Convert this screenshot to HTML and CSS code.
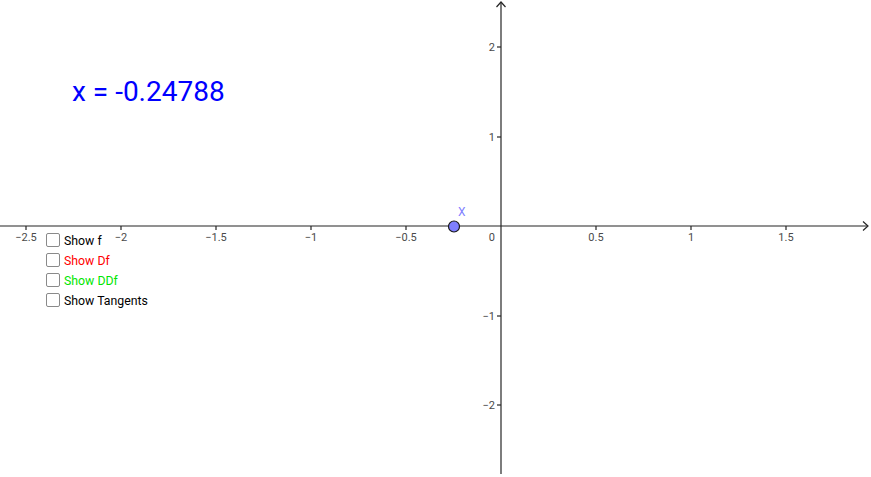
FILE: index.html
```html
<!DOCTYPE html>
<html>
<head>
<meta charset="utf-8">
<link rel="stylesheet" href="styles.css">
</head>
<body>
<div class="canvas">
  <svg class="graph" width="871" height="477" viewBox="0 0 871 477" xmlns="http://www.w3.org/2000/svg">
    <g class="axis">
      <line x1="0" y1="226" x2="868" y2="226"/>
      <polyline points="863,221.5 868,226 863,230.5" fill="none"/>
      <line x1="501" y1="2" x2="501" y2="474"/>
      <polyline points="496.5,7 501,2 505.5,7" fill="none"/>
      <line x1="26" y1="226" x2="26" y2="230"/>
      <line x1="121" y1="226" x2="121" y2="230"/>
      <line x1="216" y1="226" x2="216" y2="230"/>
      <line x1="311" y1="226" x2="311" y2="230"/>
      <line x1="406" y1="226" x2="406" y2="230"/>
      <line x1="596" y1="226" x2="596" y2="230"/>
      <line x1="691" y1="226" x2="691" y2="230"/>
      <line x1="786" y1="226" x2="786" y2="230"/>
      <line x1="497" y1="47" x2="501" y2="47"/>
      <line x1="497" y1="137" x2="501" y2="137"/>
      <line x1="497" y1="316" x2="501" y2="316"/>
      <line x1="497" y1="405" x2="501" y2="405"/>
    </g>
    <g class="ticklabel xl">
      <text x="26" y="241">−2.5</text>
      <text x="121" y="241">−2</text>
      <text x="216" y="241">−1.5</text>
      <text x="311" y="241">−1</text>
      <text x="406" y="241">−0.5</text>
      <text x="596" y="241">0.5</text>
      <text x="691" y="241">1</text>
      <text x="786" y="241">1.5</text>
    </g>
    <g class="ticklabel yl">
      <text x="495" y="241">0</text>
      <text x="495" y="51">2</text>
      <text x="495" y="141">1</text>
      <text x="495" y="320">−1</text>
      <text x="495" y="409">−2</text>
    </g>
    <circle class="point" cx="454" cy="226.5" r="5.5"/>
    <text class="pointlabel" x="458" y="216">X</text>
  </svg>
  <div class="value">x = -0.24788</div>
  <ul class="checks">
    <li class="check"><span class="box"></span><span class="lbl">Show f</span></li>
    <li class="check red"><span class="box"></span><span class="lbl">Show Df</span></li>
    <li class="check green"><span class="box"></span><span class="lbl">Show DDf</span></li>
    <li class="check"><span class="box"></span><span class="lbl">Show Tangents</span></li>
  </ul>
</div>
</body>
</html>
```
FILE: styles.css
```css
html, body {
  margin: 0;
  padding: 0;
  background: #ffffff;
}
.canvas {
  position: relative;
  width: 871px;
  height: 477px;
  overflow: hidden;
  font-family: Roboto, "Liberation Sans", sans-serif;
}
.graph {
  display: block;
}
.axis line, .axis polyline {
  stroke: #252525;
  stroke-width: 1.2;
}
.ticklabel text {
  font-family: Roboto, "Liberation Sans", sans-serif;
  font-size: 11px;
  fill: #4a4a4a;
}
.xl text {
  text-anchor: middle;
}
.yl text {
  text-anchor: end;
}
.point {
  fill: #7f7fff;
  stroke: #1a1a1a;
  stroke-width: 1.2;
}
.pointlabel {
  font-family: Roboto, "Liberation Sans", sans-serif;
  font-size: 12px;
  fill: #7f7fff;
}
.value {
  position: absolute;
  left: 72px;
  top: 75px;
  font-size: 28px;
  line-height: 34px;
  color: #0000ff;
  white-space: nowrap;
}
.checks {
  position: absolute;
  left: 46px;
  top: 232px;
  margin: 0;
  padding: 0;
  list-style: none;
  display: flex;
  flex-direction: column;
  gap: 4px;
}
.check {
  display: flex;
  align-items: center;
  gap: 4px;
  height: 16px;
  font-size: 12.3px;
  color: #000000;
}
.check.red { color: #ff0000; }
.check.green { color: #00e600; }
.box {
  width: 12px;
  height: 12px;
  border: 1.4px solid #8a8a8a;
  border-radius: 2px;
  background: #ffffff;
}
.lbl {
  line-height: 16px;
  padding-top: 2px;
}
```
